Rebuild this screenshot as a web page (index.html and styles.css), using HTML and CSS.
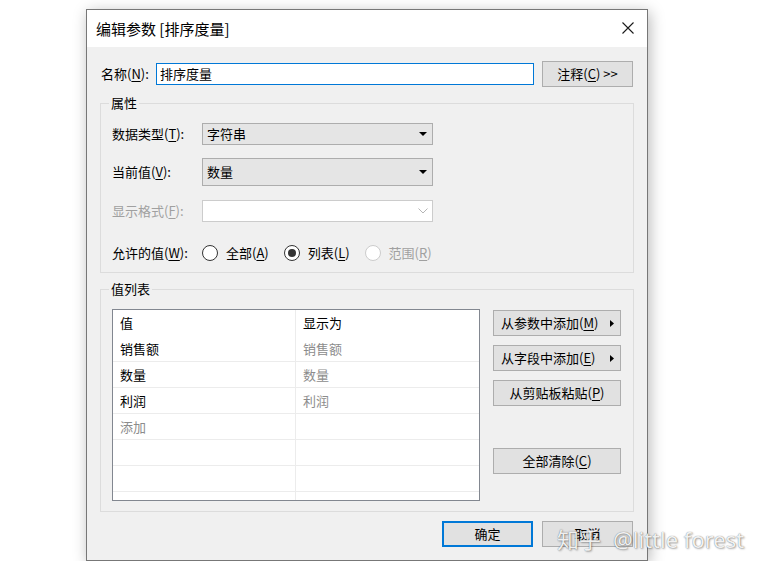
FILE: index.html
```html
<!DOCTYPE html>
<html>
<head>
<meta charset="utf-8">
<link rel="stylesheet" href="styles.css">
</head>
<body>

<div class="dialog">
    <div class="titlebar">
        <span class="title">编辑参数 [排序度量]</span>
        <svg class="close" width="12" height="12" viewBox="0 0 12 12">
            <path d="M0.5 0.5 L11.5 11.5 M11.5 0.5 L0.5 11.5" stroke="#1a1a1a" stroke-width="1.1" fill="none"/>
        </svg>
    </div>

    <div class="content">
        <div class="name-row">
            <span class="name-label">名称(<u>N</u>):</span>
            <div class="textbox">排序度量</div>
            <button class="btn btn-note">注释(<u>C</u>) &gt;&gt;</button>
        </div>

        <fieldset class="group">
            <legend>属性</legend>
            <div class="group-inner props">
                <div class="field row-type">
                    <span class="field-label">数据类型(<u>T</u>):</span>
                    <div class="combo">
                        <span>字符串</span>
                        <svg class="drop" width="8" height="4" viewBox="0 0 8 4"><path d="M0 0 H8 L4 4 Z"/></svg>
                    </div>
                </div>
                <div class="field row-current">
                    <span class="field-label">当前值(<u>V</u>):</span>
                    <div class="combo combo-tall">
                        <span>数量</span>
                        <svg class="drop" width="8" height="4" viewBox="0 0 8 4"><path d="M0 0 H8 L4 4 Z"/></svg>
                    </div>
                </div>
                <div class="field row-format is-disabled">
                    <span class="field-label">显示格式(<u>F</u>):</span>
                    <div class="combo combo-off">
                        <span></span>
                        <svg class="chevron" width="10" height="6" viewBox="0 0 10 6"><path d="M0.5 0.5 L5 5 L9.5 0.5" stroke="#b5b5b5" fill="none"/></svg>
                    </div>
                </div>
                <div class="field row-allowed">
                    <span class="field-label">允许的值(<u>W</u>):</span>
                    <div class="radios">
                        <span class="radio"><i class="circle"></i>全部(<u>A</u>)</span>
                        <span class="radio checked"><i class="circle"></i>列表(<u>L</u>)</span>
                        <span class="radio is-disabled"><i class="circle"></i>范围(<u>R</u>)</span>
                    </div>
                </div>
            </div>
        </fieldset>

        <fieldset class="group group-list">
            <legend>值列表</legend>
            <div class="group-inner values">
                <div class="listview">
                    <div class="lv-row lv-head">
                        <div class="lv-cell">值</div>
                        <div class="lv-cell">显示为</div>
                    </div>
                    <div class="lv-row">
                        <div class="lv-cell">销售额</div>
                        <div class="lv-cell lv-shown">销售额</div>
                    </div>
                    <div class="lv-row">
                        <div class="lv-cell">数量</div>
                        <div class="lv-cell lv-shown">数量</div>
                    </div>
                    <div class="lv-row">
                        <div class="lv-cell">利润</div>
                        <div class="lv-cell lv-shown">利润</div>
                    </div>
                    <div class="lv-row">
                        <div class="lv-cell lv-add">添加</div>
                        <div class="lv-cell"></div>
                    </div>
                    <div class="lv-row"><div class="lv-cell"></div><div class="lv-cell"></div></div>
                    <div class="lv-row"><div class="lv-cell"></div><div class="lv-cell"></div></div>
                    <div class="lv-row"><div class="lv-cell"></div><div class="lv-cell"></div></div>
                </div>

                <div class="side-buttons">
                    <button class="btn btn-menu">
                        <span>从参数中添加(<u>M</u>)</span>
                        <svg width="4" height="7" viewBox="0 0 4 7"><path d="M0 0 L4 3.5 L0 7 Z"/></svg>
                    </button>
                    <button class="btn btn-menu">
                        <span>从字段中添加(<u>E</u>)</span>
                        <svg width="4" height="7" viewBox="0 0 4 7"><path d="M0 0 L4 3.5 L0 7 Z"/></svg>
                    </button>
                    <button class="btn">从剪贴板粘贴(<u>P</u>)</button>
                    <button class="btn btn-clear">全部清除(<u>C</u>)</button>
                </div>
            </div>
        </fieldset>

        <div class="footer">
            <button class="btn btn-ok">确定</button>
            <button class="btn">取消</button>
        </div>
    </div>
</div>

<div class="watermark"><span class="wm-logo">知乎</span><span class="wm-user">@little forest</span></div>

</body>
</html>
```

FILE: styles.css
```css
* {
    box-sizing: border-box;
}

html {
    background: #fff;
}

body {
    margin: 0;
    padding: 9px 0 0 86px;
    font-family: "Noto Sans CJK SC", sans-serif;
    font-size: 13px;
    line-height: 16px;
    color: #000;
}

u {
    text-underline-offset: 2px;
}

.dialog {
    width: 562px;
    height: 552px;
    border: 1px solid #777;
    background: #f0f0f0;
    box-shadow: 2px 3px 14px rgba(0, 0, 0, 0.28);
}

/* title bar */
.titlebar {
    height: 37px;
    background: #fff;
    display: flex;
    align-items: center;
    justify-content: space-between;
    padding: 0 13px 0 9px;
}
.title {
    font-size: 15px;
    line-height: 20px;
    margin-top: 1px;
}
.close {
    display: block;
    margin-top: -1px;
}

.content {
    padding: 14px 14px 0 14px;
}

/* buttons */
.btn {
    font: inherit;
    color: #000;
    height: 26px;
    margin: 0;
    padding: 0;
    background: #e1e1e1;
    border: 1px solid #adadad;
    border-radius: 0;
    display: flex;
    align-items: center;
    justify-content: center;
}

/* name row */
.name-row {
    display: flex;
    align-items: center;
    height: 26px;
}
.name-label {
    width: 55px;
}
.textbox {
    width: 378px;
    height: 22px;
    background: #fff;
    border: 1px solid #0078d7;
    padding: 2px 3px;
}
.btn-note {
    width: 91px;
    margin-left: 8px;
}

/* group boxes */
.group {
    margin: 8px -1px 0;
    padding: 0;
    min-width: 0;
    border: 1px solid #dcdcdc;
}
.group legend {
    margin-left: 8px;
    padding: 0 2px;
    line-height: 16px;
}
.group-inner {
    padding: 12px 12px 11px 11px;
}

.field {
    display: flex;
    align-items: center;
}
.field-label {
    width: 90px;
    flex: none;
}
.is-disabled {
    color: #a0a0a0;
}

.row-current {
    margin-top: 13px;
}
.row-format {
    margin-top: 14px;
}
.row-allowed {
    margin-top: 23px;
    height: 16px;
}

.combo {
    width: 231px;
    height: 22px;
    display: flex;
    align-items: center;
    justify-content: space-between;
    padding: 0 5px 0 4px;
    background: #e5e5e5;
    border: 1px solid #adadad;
}
.combo-tall {
    height: 28px;
}
.combo-off {
    background: #fff;
    border-color: #cccccc;
    padding-right: 4px;
}
.drop {
    display: block;
    fill: #000;
}
.chevron {
    display: block;
}

/* radios */
.radios {
    display: flex;
    align-items: center;
}
.radio {
    display: flex;
    align-items: center;
    margin-right: 15px;
}
.radio .circle {
    width: 16px;
    height: 16px;
    border: 1px solid #333;
    border-radius: 50%;
    background: #fff;
    margin-right: 8px;
    display: flex;
    align-items: center;
    justify-content: center;
}
.radio.checked .circle::after {
    content: "";
    width: 8px;
    height: 8px;
    border-radius: 50%;
    background: #333;
}
.radio.is-disabled .circle {
    border-color: #cccccc;
}

/* value list */
.group-list {
    margin-top: 8px;
}
.values {
    display: flex;
    align-items: flex-start;
    padding-bottom: 10px;
}
.listview {
    width: 368px;
    height: 192px;
    border: 1px solid #828790;
    background: #fff;
    overflow: hidden;
    flex: none;
}
.lv-row {
    display: grid;
    grid-template-columns: 183px 1fr;
    height: 26px;
    border-bottom: 1px solid #ececec;
}
.lv-head {
    border-bottom: none;
}
.lv-cell {
    padding-left: 7px;
    display: flex;
    align-items: center;
}
.lv-cell:first-child {
    border-right: 1px solid #ececec;
}
.lv-shown,
.lv-add {
    color: #8c8c8c;
}

.side-buttons {
    width: 128px;
    margin: 1px 0 0 13px;
    display: flex;
    flex-direction: column;
    gap: 9px;
}
.btn-menu {
    justify-content: space-between;
    padding: 0 6px 0 7px;
}
.btn-menu svg {
    display: block;
    fill: #000;
}
.btn-clear {
    margin-top: 33px;
}

/* footer */
.footer {
    display: flex;
    justify-content: flex-end;
    gap: 9px;
    margin-top: 9px;
}
.footer .btn {
    width: 91px;
}
.btn-ok {
    border: 2px solid #0078d7;
}

/* watermark over the screenshot */
.watermark {
    position: absolute;
    left: 557px;
    top: 524px;
    font-size: 22px;
    line-height: 28px;
    color: rgba(255, 255, 255, 0.92);
    text-shadow: 0 0 1px rgba(0, 0, 0, 0.55), 1px 1px 2px rgba(0, 0, 0, 0.3);
    white-space: nowrap;
}
.wm-user {
    font-family: "Noto Sans", sans-serif;
    margin-left: 12px;
}
```
